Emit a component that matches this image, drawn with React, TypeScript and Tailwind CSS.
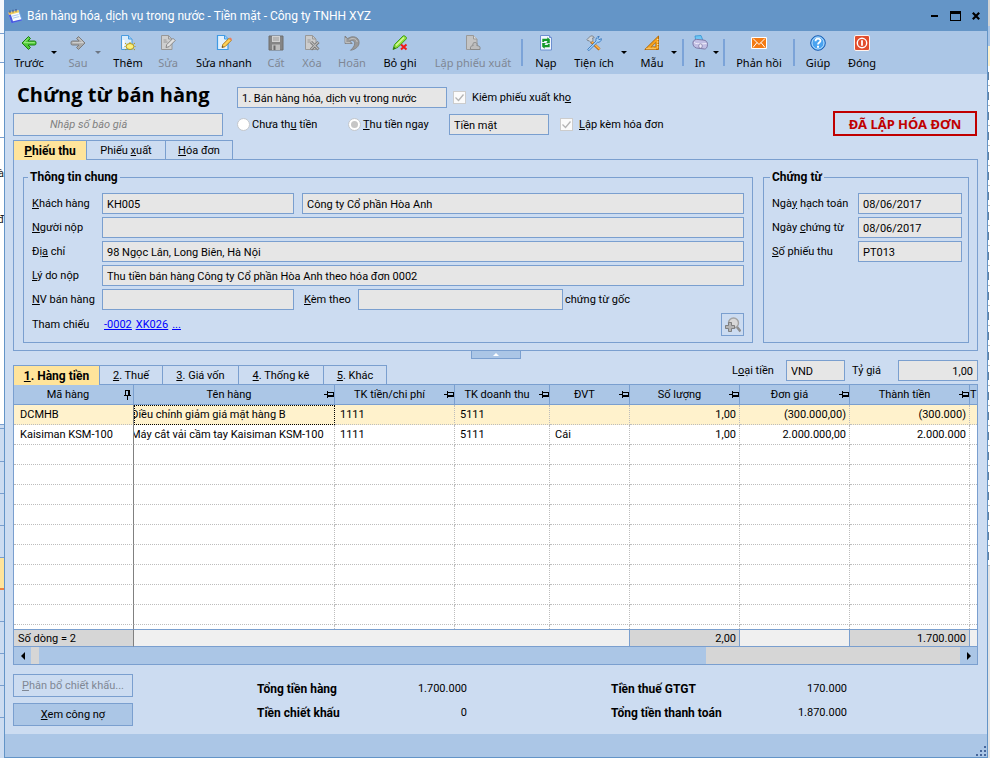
import React from "react";

/* ---------- icons ---------- */

function Svg({ children, size = 16 }: { children: React.ReactNode; size?: number }) {
  return (
    <svg width={size} height={size} viewBox="0 0 16 16" aria-hidden="true" className="shrink-0">
      {children}
    </svg>
  );
}

const BackIcon = () => (
  <Svg>
    <path d="M7.5 1.5 1 8l6.500 6.500 2-2L7 10h6.500a1.500 1.500 0 0 0 1.500-1.500v-1A1.500 1.500 0 0 0 13.500 6H7l2.500-2.500z" fill="#4cc936" stroke="#1c7d12" />
    <path d="M7.500 3 2.800 7.700h11" fill="none" stroke="#a4ee8c" />
  </Svg>
);

const ForwardIcon = () => (
  <Svg>
    <path d="M8.500 1.500 15 8l-6.500 6.500-2-2L9 10H2.500A1.500 1.500 0 0 1 1 8.500v-1A1.500 1.500 0 0 1 2.500 6H9L6.500 3.500z" fill="#a9a9a9" stroke="#7d7d7d" />
    <path d="M8.500 3 13.200 7.700H2.500" fill="none" stroke="#d6d6d6" />
  </Svg>
);

const AddIcon = () => (
  <Svg>
    <path d="M1.500.5h7l3.500 3.500v10.500H1.500z" fill="#d9ecfc" stroke="#4a9ce0" />
    <path d="M8.500.5v3.500H12" fill="#9dcdf5" stroke="#4a9ce0" />
    <path d="M3.500 5v7" stroke="#fff" strokeWidth="2" />
    <ellipse cx="10" cy="11.500" rx="3.800" ry="3" fill="#fdf07c" stroke="#b39a1c" />
    <path d="M5 8l1.500 1.200M15 8l-1.500 1.200M5 15l1.500-1.200M15 15l-1.500-1.200M10 7v1M4.500 11.500h1M14.500 11.500h1" stroke="#b39a1c" />
  </Svg>
);

const EditIcon = () => (
  <Svg>
    <path d="M1.500.5h7l3.500 3.500v10.500H1.500z" fill="#cfcfcf" stroke="#989898" />
    <path d="M8.500.5V4H12M3.500 5h3M3.500 7h4" fill="none" stroke="#989898" />
    <path d="m6 12.500.8-3L13 3.300l2.200 2.200L9 11.700z" fill="#e2e2e2" stroke="#868686" />
  </Svg>
);

const QuickEditIcon = () => (
  <Svg>
    <path d="M1.500.5h7l3.500 3.500v10.500H1.500z" fill="#e3f1fd" stroke="#3f9ae4" strokeWidth="1.200" />
    <path d="M8.500.5V4H12" fill="#a8d3f7" stroke="#3f9ae4" />
    <path d="m6 12.500.8-3L13 3.300l2.200 2.200L9 11.700z" fill="#ffd257" stroke="#b07a1e" />
    <path d="m13 3.300 2.200 2.200 .6-.7c.5-.8-1.200-2.600-2.100-2.100z" fill="#ef7d5e" />
    <path d="m6 12.500.5-1.600 1.100 1.100z" fill="#333" />
  </Svg>
);

const SaveIcon = () => (
  <Svg>
    <path d="M1 1h14v14H1z" fill="#858585" stroke="#6f6f6f" />
    <path d="M4 1h8v6H4z" fill="#d2d2d2" />
    <path d="M5 3h6M5 5h6" stroke="#9b9b9b" />
    <path d="M4 9.500h8V15H4z" fill="#bdbdbd" />
    <path d="M5.500 10.500h2V15h-2z" fill="#6c6c6c" />
  </Svg>
);

const DeleteIcon = () => (
  <Svg>
    <path d="M1.500.5h7l3.500 3.500v10.500H1.500z" fill="#cccccc" stroke="#999" />
    <path d="M8.500.5V4H12M3.500 5h3M3.500 7h3" fill="none" stroke="#999" />
    <path d="m7 7 7.500 7.500M14.500 7 7 14.500" stroke="#777" strokeWidth="3" />
    <path d="m7.200 7.200 7 7M14.200 7.200l-7 7" stroke="#c0c0c0" strokeWidth="1.200" />
  </Svg>
);

const UndoIcon = () => (
  <Svg>
    <path d="M1 1v7.500h7.200L5.900 6.200C8.500 4.700 10.800 5.800 10.600 8.800 10.500 11 9 13 6.500 15.300c5-.8 8.600-3.700 8.600-7.700C15.100 1.900 8.500 0 3.700 3.600z" fill="#999" stroke="#7b7b7b" strokeWidth=".8" />
    <path d="M1.800 3v4.700h4.500M5.500 4.500C9 2.600 12.500 3.500 13.200 7" fill="none" stroke="#c6c6c6" />
  </Svg>
);

const UnpostIcon = () => (
  <Svg>
    <path d="m1 14.500 1.500-5L11 1c1.300-1 4.500 1.400 3.200 3L6 12.300z" fill="#8fe03b" stroke="#3f9b1c" />
    <path d="M4 10.500 12 2.500" stroke="#d5f99f" strokeWidth="1.500" />
    <path d="m1 14.500 1-2.800 1.800 1.800z" fill="#2b6a14" />
    <path d="m9 9.500 5.500 5M14.500 9.500l-5.500 5" stroke="#f01818" strokeWidth="2" />
  </Svg>
);

const IssueIcon = () => (
  <Svg>
    <path d="M1.500.5h7l3.500 3.500v10.500H1.500z" fill="#c4c4c4" stroke="#999" />
    <path d="M8.500.5V4H12" fill="#ddd" stroke="#999" />
    <path d="M5.500 14.500v-2.200c0-1 1.500-1.500 2.700-1.800C6 7 13.500 6 11.800 10.500c1.500.3 3.200.8 3.200 1.800v2.200z" fill="#bdbdbd" stroke="#8a8a8a" />
  </Svg>
);

const ReloadIcon = () => (
  <Svg>
    <path d="M2.500.5h9l2 2v12.500h-11z" fill="#f1f6ff" stroke="#6d8fd0" />
    <path d="M11.500.5v2h2" fill="#b8caee" stroke="#6d8fd0" />
    <path d="M4.300 7V3.700h5V2.300l2.500 2v3.900H8.200l1.300-2.200H6.500L5.800 7z" fill="#149a2a" />
    <path d="M11.700 9v3.300h-5v1.400l-2.500-2V7.900h3.600L6.500 10h3l.7-1z" fill="#149a2a" />
  </Svg>
);

const ToolsIcon = () => (
  <Svg>
    <path d="m5 6.500 8.500 8" stroke="#bb6a10" strokeWidth="3" />
    <path d="m5 6 8.700 8.200" stroke="#ffb74d" strokeWidth="1.500" />
    <path d="M1 4.500 4.500 1C6.500.5 8 1.500 8.200 2.800L6.500 3l.6 2.200L5 7.500 3 5.500 2 6z" fill="#cfd3d8" stroke="#70767e" strokeWidth=".8" />
    <path d="m2 14 8-8c-.5-2.500 1-4.500 3.200-4.700L12 3.500l1 1.200 2.400-1c.2 2.300-1.900 4-4 3.600L3.500 15C2.500 16 1 15 2 14z" fill="#a9d4f9" stroke="#2d6fb8" strokeWidth=".8" />
  </Svg>
);

const RulerIcon = () => (
  <Svg>
    <path d="M14.500 1v13.500H.8z" fill="#f6a21c" stroke="#b36a08" />
    <path d="M11.800 7.500v4.300H7.300z" fill="#abc6e6" stroke="#b36a08" strokeWidth=".8" />
    <path d="M3 13v1.500M5 12.500v2M7 13v1.500M9 12.500v2M11 13v1.500M13 4.500h1.500M13 7h1.500M13 9.500h1.500M13 12h1.500" stroke="#fff1c4" strokeWidth=".8" />
  </Svg>
);

const PrinterIcon = () => (
  <Svg>
    <path d="m3 1 6-.5 2 5-7 1.500z" fill="#6ec6f5" stroke="#3593d2" strokeWidth=".8" />
    <path d="M1 7c.5-2 3-3 5-2.500l5 .5c3 .2 4.500 2 4.500 4.500 0 3-1.500 4.500-3 4.500L4.500 13C2 12.500.5 10 1 7z" fill="#c2bfe4" stroke="#77739f" strokeWidth=".9" />
    <path d="M2 7.500c2 1.500 5 1 7 1.500l5.500-.5" fill="none" stroke="#efeefb" />
    <ellipse cx="8.500" cy="11" rx="1.800" ry="2.200" fill="#eceaf9" stroke="#77739f" strokeWidth=".7" />
  </Svg>
);

const MailIcon = () => (
  <Svg>
    <path d="M.5 2.500h15v11H.5z" fill="#f47a12" stroke="#fff" />
    <path d="m2 3.500 6 6 6-6M2 12.500l4-5M14 12.500l-4-5" fill="none" stroke="#fff" strokeWidth="1" />
  </Svg>
);

const HelpIcon = () => (
  <Svg>
    <circle cx="8" cy="8" r="7.300" fill="#4aa3f0" stroke="#1e5fb2" />
    <circle cx="8" cy="8" r="6" fill="none" stroke="#b9defc" strokeWidth="1" />
    <path d="M5.500 6.200c0-3.300 5-3.200 5-.5C10.500 7.500 8 7.600 8 9.500" fill="none" stroke="#fff" strokeWidth="1.800" />
    <path d="M7 10.800h2v1.900H7z" fill="#fff" />
  </Svg>
);

const PowerIcon = () => (
  <Svg>
    <rect x=".5" y=".5" width="15" height="15" rx="1.500" fill="#e24c2c" stroke="#fff3ee" />
    <circle cx="8" cy="8" r="4.700" fill="none" stroke="#fff" strokeWidth="1.400" />
    <path d="M8 5.200v5.600" stroke="#fff" strokeWidth="1.800" />
  </Svg>
);

const AppIcon = () => (
  <Svg>
    <path d="M1 4.500 11.500 2 15 12 4.500 15z" fill="#f8fbff" stroke="#6aa0e8" strokeWidth=".8" />
    <path d="M.8 4.500 4.500 15.200 15 12.500l-.4-1.300L6 13.300 3 4z" fill="#4b5be0" />
    <path d="M1 4.500 11.500 2l.8 2.200L2 7z" fill="#f3cf5c" />
    <path d="M5 8.200 11.500 6.600M5.700 10.200l6.500-1.600" stroke="#9fc2ee" strokeWidth=".9" />
    <path d="M3 2.500v2.700M6 1.800v2.700M9 1v2.700" stroke="#384a86" strokeWidth="1" />
  </Svg>
);

const ZoomAddIcon = () => (
  <Svg>
    <circle cx="8.500" cy="6" r="5" fill="#d9d9d9" stroke="#a3a3a3" strokeWidth="1.400" />
    <path d="m12 10 3.500 4.500" stroke="#8f8f8f" strokeWidth="2.600" />
    <path d="M3.500 5.500h3v3h3v3h-3v3h-3v-3h-3v-3h3z" fill="#b5b5b5" stroke="#777" strokeWidth=".9" />
  </Svg>
);

function Pin({ pinned = false }: { pinned?: boolean }) {
  return (
    <svg width="10" height="10" viewBox="0 0 10 10" aria-hidden="true" className={pinned ? "mr-px shrink-0" : "shrink-0"} shapeRendering="crispEdges">
      {pinned ? (
        <path d="M3.500.5h4v5M2 5.500h7M3.500 0v5.500M6.500 0v5.500M5.500 6v4" fill="none" stroke="#000" />
      ) : (
        <path d="M0 4.500h3M3.500 1v7M4 2.500h5.500v4M4 5.500h5.500M4 6.500h5.500" fill="none" stroke="#000" />
      )}
    </svg>
  );
}

/* ---------- toolbar ---------- */

type Tool = { label: string; icon: React.ReactNode; cls: string; off?: boolean };

function ToolButton({ label, icon, cls, off }: Tool) {
  return (
    <button
      type="button"
      disabled={off}
      className={`flex shrink-0 flex-col items-center gap-1 pt-1 leading-4 whitespace-nowrap ${cls} ${off ? "text-[#7f8794]" : "text-black"}`}
    >
      {icon}
      <span className="w-max">{label}</span>
    </button>
  );
}

function MenuArrow({ label, off }: { label: string; off?: boolean }) {
  return (
    <button type="button" aria-label={label} disabled={off} className="flex w-3 shrink-0 items-center justify-center">
      <span className={`border-x-[3px] border-t-[3px] border-x-transparent ${off ? "border-t-[#6d7683]" : "border-t-black"}`} />
    </button>
  );
}

const Divider = ({ cls }: { cls: string }) => (
  <span className={`my-2 flex shrink-0 justify-center ${cls}`}>
    <span className="w-0.5 bg-[#7ba3d8]" />
  </span>
);

function Toolbar() {
  return (
    <nav className="flex h-[43px] bg-[#abc6e6] pl-[5px] font-['Noto_Sans','Open_Sans',sans-serif] text-[11px]">
      <ToolButton label="Trước" icon={<BackIcon />} cls="w-[38px]" />
      <MenuArrow label="Chứng từ trước" />
      <ToolButton label="Sau" icon={<ForwardIcon />} cls="ml-1 w-7" off />
      <MenuArrow label="Chứng từ sau" off />
      <ToolButton label="Thêm" icon={<AddIcon />} cls="w-12" />
      <ToolButton label="Sửa" icon={<EditIcon />} cls="w-8" off />
      <ToolButton label="Sửa nhanh" icon={<QuickEditIcon />} cls="w-20" />
      <ToolButton label="Cất" icon={<SaveIcon />} cls="w-6" off />
      <ToolButton label="Xóa" icon={<DeleteIcon />} cls="w-12" off />
      <ToolButton label="Hoãn" icon={<UndoIcon />} cls="w-8" off />
      <ToolButton label="Bỏ ghi" icon={<UnpostIcon />} cls="w-16" />
      <ToolButton label="Lập phiếu xuất" icon={<IssueIcon />} cls="w-[82px]" off />
      <Divider cls="w-4" />
      <ToolButton label="Nạp" icon={<ReloadIcon />} cls="w-8" />
      <ToolButton label="Tiện ích" icon={<ToolsIcon />} cls="ml-2 w-12" />
      <MenuArrow label="Mở tiện ích" />
      <ToolButton label="Mẫu" icon={<RulerIcon />} cls="ml-1.5 w-8" />
      <MenuArrow label="Chọn mẫu" />
      <Divider cls="w-1.5" />
      <ToolButton label="In" icon={<PrinterIcon />} cls="ml-1 w-5" />
      <MenuArrow label="Tùy chọn in" />
      <Divider cls="w-1" />
      <ToolButton label="Phản hồi" icon={<MailIcon />} cls="w-[66px]" />
      <Divider cls="w-1" />
      <ToolButton label="Giúp" icon={<HelpIcon />} cls="w-11" />
      <ToolButton label="Đóng" icon={<PowerIcon />} cls="w-11" />
    </nav>
  );
}

/* ---------- form pieces ---------- */

function Box({ id, value, cls, label }: { id: string; value: string; cls: string; label?: string }) {
  return (
    <input
      id={id}
      aria-label={label}
      readOnly
      defaultValue={value}
      className={`h-[21px] min-w-0 border border-[#7a9fcf] bg-[#e6e6e6] px-1 pt-0.5 text-black outline-none ${cls}`}
    />
  );
}

function Tick({ id, children, cls }: { id: string; children: React.ReactNode; cls: string }) {
  return (
    <span className={`flex items-center gap-1.5 ${cls}`}>
      <span className="relative flex">
        <input id={id} type="checkbox" defaultChecked disabled className="size-[13px] appearance-none border border-[#cccccc] bg-[#fbfbfb]" />
        <svg viewBox="0 0 13 13" aria-hidden="true" className="pointer-events-none absolute inset-0 size-[13px]">
          <path d="m2.500 6.500 3 3 5-6" fill="none" stroke="#b4b4b4" strokeWidth="1.300" />
        </svg>
      </span>
      <label htmlFor={id}>{children}</label>
    </span>
  );
}

function Choice({ id, children, cls, on }: { id: string; children: React.ReactNode; cls: string; on?: boolean }) {
  return (
    <span className={`flex items-center gap-0.5 ${cls}`}>
      <span className="relative flex items-center justify-center">
        <input id={id} name="payment" type="radio" defaultChecked={on} disabled className="size-[13px] appearance-none rounded-full border border-[#c3c7cc] bg-white" />
        {on && <span className="pointer-events-none absolute size-[7px] rounded-full bg-[#c6c6c6]" />}
      </span>
      <label htmlFor={id}>{children}</label>
    </span>
  );
}

function Tab({ children, cls, on, last }: { children: React.ReactNode; cls: string; on?: boolean; last?: boolean }) {
  return (
    <button
      type="button"
      role="tab"
      aria-selected={!!on}
      className={`shrink-0 border-t border-l border-[#7a9fcf] whitespace-nowrap ${last ? "border-r" : ""} ${on ? "relative z-10 -mb-px bg-[#ffe49b] text-[12px] font-bold" : "pt-px"} ${cls}`}
    >
      {children}
    </button>
  );
}

const Row = ({ children }: { children: React.ReactNode }) => <div className="flex h-[21px] items-center">{children}</div>;

function GeneralInfo() {
  return (
    <fieldset className="flex min-w-0 flex-1 flex-col gap-[3px] border border-[#7a9fcf] px-2 pt-2 pb-1.5">
      <legend className="-ml-1 px-0.5 text-[12px] leading-4 font-bold">Thông tin chung</legend>
      <Row>
        <label htmlFor="customer" className="w-[70px]"><u>K</u>hách hàng</label>
        <Box id="customer" value="KH005" cls="mr-2 w-[192px]" />
        <Box id="customer-name" label="Tên khách hàng" value="Công ty Cổ phần Hòa Anh" cls="flex-1" />
      </Row>
      <Row>
        <label htmlFor="payer" className="w-[70px]"><u>N</u>gười nộp</label>
        <Box id="payer" value="" cls="flex-1" />
      </Row>
      <Row>
        <label htmlFor="address" className="w-[70px]">Đị<u>a</u> chỉ</label>
        <Box id="address" value="98 Ngọc Lân, Long Biên, Hà Nội" cls="flex-1" />
      </Row>
      <Row>
        <label htmlFor="reason" className="w-[70px]"><u>L</u>ý do nộp</label>
        <Box id="reason" value="Thu tiền bán hàng Công ty Cổ phần Hòa Anh theo hóa đơn 0002" cls="flex-1" />
      </Row>
      <Row>
        <label htmlFor="seller" className="w-[70px]"><u>N</u>V bán hàng</label>
        <Box id="seller" value="" cls="w-[192px]" />
        <label htmlFor="attached" className="w-16 pl-2.5"><u>K</u>èm theo</label>
        <Box id="attached" value="" cls="w-[205px]" />
        <span className="pl-0.5">chứng từ gốc</span>
      </Row>
      <div className="flex h-[23px] items-center">
        <span className="w-[70px]">Tham chiếu</span>
        <span className="flex flex-1 gap-1 pl-0.5 text-[#0000ff] underline">
          <a href="#0002">-0002</a>
          <a href="#XK026">XK026</a>
          <a href="#more">...</a>
        </span>
        <button type="button" aria-label="Tìm chứng từ" className="flex size-[23px] items-center justify-center border border-[#7a9fcf]">
          <ZoomAddIcon />
        </button>
      </div>
    </fieldset>
  );
}

function VoucherInfo() {
  return (
    <fieldset className="flex w-[206px] shrink-0 flex-col gap-[3px] border border-[#7a9fcf] px-1.5 pt-2">
      <legend className="px-0.5 text-[12px] leading-4 font-bold">Chứng từ</legend>
      <Row>
        <label htmlFor="posted" className="w-[88px] pl-0.5">Ngà<u>y</u> hạch toán</label>
        <Box id="posted" value="08/06/2017" cls="w-[104px]" />
      </Row>
      <Row>
        <label htmlFor="dated" className="w-[88px] pl-0.5">Ngày <u>c</u>hứng từ</label>
        <Box id="dated" value="08/06/2017" cls="w-[104px]" />
      </Row>
      <Row>
        <label htmlFor="receipt" className="w-[88px] pl-0.5"><u>S</u>ố phiếu thu</label>
        <Box id="receipt" value="PT013" cls="w-[104px]" />
      </Row>
    </fieldset>
  );
}

/* ---------- grid ---------- */

const columns = ["Mã hàng", "Tên hàng", "TK tiền/chi phí", "TK doanh thu", "ĐVT", "Số lượng", "Đơn giá", "Thành tiền"];

const items = [
  ["DCMHB", "Điều chỉnh giảm giá mặt hàng B", "1111", "5111", "", "1,00", "(300.000,00)", "(300.000)"],
  ["Kaisiman KSM-100", "Máy cắt vải cầm tay Kaisiman KSM-100", "1111", "5111", "Cái", "1,00", "2.000.000,00", "2.000.000"],
];

const rows: string[][] = [...items, ...Array.from({ length: 9 }, () => Array<string>(8).fill(""))];

function cellClass(col: number, row: number) {
  const base = "h-5 overflow-hidden border-r border-b border-b-[#bdbdbd] border-dotted p-0 whitespace-nowrap";
  if (col === 0) return `${base} border-r-[#808080] [border-right-style:solid] pl-1.5`;
  if (col === 1 && row === 0) return `${base} border-r-[#bdbdbd] outline-1 -outline-offset-1 outline-dotted outline-black`;
  if (col === 1) return `${base} border-r-[#bdbdbd]`;
  if (col > 4) return `${base} border-r-[#bdbdbd] pr-[3px] text-right`;
  return `${base} border-r-[#bdbdbd] pl-[5px]`;
}

function Grid() {
  return (
    <div className="border border-[#7a9fcf]">
      <table className="w-full table-fixed border-separate border-spacing-0 bg-white leading-[15px]">
        <colgroup>
          <col className="w-[120px]" />
          <col className="w-[201px]" />
          <col className="w-[120px]" />
          <col className="w-[95px]" />
          <col className="w-20" />
          <col className="w-[110px]" />
          <col className="w-[110px]" />
          <col className="w-[120px]" />
          <col />
        </colgroup>
        <thead className="bg-[#abc6e6]">
          <tr>
            {columns.map((name, i) => (
              <th key={name} scope="col" className="h-5 border-r border-b border-[#7a9fcf] p-0 font-normal">
                <span className="flex items-center">
                  <span className="flex-1 text-center">{name}</span>
                  <Pin pinned={i === 0} />
                </span>
              </th>
            ))}
            <th scope="col" className="h-5 overflow-hidden border-b border-[#7a9fcf] p-0 text-left font-normal">T</th>
          </tr>
        </thead>
        <tbody>
          {rows.map((cells, r) => (
            <tr key={r} className={r === 0 ? "bg-[#fff2cc]" : ""}>
              {cells.map((text, c) => (
                <td key={c} className={cellClass(c, r)}>
                  {c === 1 ? <span className="-ml-[3px]">{text}</span> : text}
                </td>
              ))}
              <td className="h-5 border-b border-dotted border-[#bdbdbd] p-0" />
            </tr>
          ))}
          <tr>
            {columns.map((name, c) => (
              <td key={name} className={c === 0 ? "h-1 border-r border-[#808080] p-0" : "h-1 border-r border-dotted border-[#bdbdbd] p-0"} />
            ))}
            <td className="h-1 p-0" />
          </tr>
        </tbody>
        <tfoot className="text-black">
          <tr>
            <td className="h-[18px] border-y border-r border-y-[#7a9fcf] border-r-[#808080] bg-[#d6d6d6] p-0 pl-1">Số dòng = 2</td>
            <td colSpan={4} className="h-[18px] border-y border-r border-[#7a9fcf] bg-[#f0f0f0] p-0" />
            <td className="h-[18px] border-y border-r border-[#7a9fcf] bg-[#d6d6d6] p-0 pr-[3px] text-right">2,00</td>
            <td className="h-[18px] border-y border-r border-[#7a9fcf] bg-[#f0f0f0] p-0" />
            <td className="h-[18px] border-y border-r border-[#7a9fcf] bg-[#d6d6d6] p-0 pr-[3px] text-right">1.700.000</td>
            <td className="h-[18px] border-y border-[#7a9fcf] bg-[#f0f0f0] p-0" />
          </tr>
        </tfoot>
      </table>
      <div className="flex h-[17px] bg-[#d6d6d6]">
        <button type="button" aria-label="Cuộn trái" className="flex w-[17px] items-center justify-center bg-[#abc6e6]">
          <span className="border-y-4 border-r-4 border-y-transparent border-r-black" />
        </button>
        <span className="w-2" />
        <span className="w-[667px] bg-[#abc6e6]" />
        <span className="flex-1" />
        <button type="button" aria-label="Cuộn phải" className="flex w-[17px] items-center justify-center bg-[#abc6e6]">
          <span className="border-y-4 border-l-4 border-y-transparent border-l-black" />
        </button>
      </div>
    </div>
  );
}

/* ---------- window behind ---------- */

const leftBands = [
  "h-[34px] border-b border-[#7a9fcf] bg-[#f6f9fd]",
  "h-[29px] border-b border-[#7a9fcf] bg-[#f6f9fd]",
  "h-[75px] border-b border-[#7a9fcf] bg-white",
];

const leftCells = [
  "h-1 border-b border-[#7a9fcf] bg-[#ccdcf1]",
  "h-[33px] border-b border-[#7a9fcf] bg-[#ccdcf1]",
  "h-8 border-b border-[#7a9fcf] bg-[#ccdcf1]",
  "h-8 border-b border-[#7a9fcf] bg-[#ccdcf1]",
  "h-8 border-b border-[#7a9fcf] bg-[#ccdcf1]",
  "h-8 border-b-2 border-[#f08040] bg-[#ffe49b]",
  "h-8 border-b border-[#7a9fcf] bg-[#ccdcf1]",
  "h-8 border-b border-[#7a9fcf] bg-[#ccdcf1]",
  "h-8 border-b border-[#7a9fcf] bg-[#ccdcf1]",
  "h-8 border-b border-[#7a9fcf] bg-[#ccdcf1]",
];

function LeftEdge() {
  return (
    <aside className="flex w-1 shrink-0 flex-col overflow-hidden bg-[#ccdcf1] text-[11px] text-[#222]">
      {leftBands.map((band, i) => (
        <span key={i} className={band} />
      ))}
      <div className="flex h-[287px] flex-col items-end border-b border-[#7a9fcf] bg-white pt-7">
        <span className="leading-4">à</span>
        <span className="pt-[30px] leading-4">đ</span>
      </div>
      {leftCells.map((band, i) => (
        <span key={i} className={band} />
      ))}
    </aside>
  );
}

function RightEdge() {
  return (
    <aside className="flex w-0.5 shrink-0 flex-col overflow-hidden bg-white">
      <span className="h-[26px] bg-[#d4d4d4]" />
      <span className="h-5 bg-[#abc6e6]" />
      <span className="h-5 bg-[#fff2cc]" />
      {Array.from({ length: 25 }, (_, i) => (
        <span key={i} className="flex h-5 shrink-0 flex-col justify-center border-b border-[#bdbdbd]">
          <span className="h-2 w-px bg-[#5f7f9f]" />
        </span>
      ))}
      <span className="flex-1 bg-[#e4e4e4]" />
    </aside>
  );
}

/* ---------- page ---------- */

export default function App() {
  return (
    <div className="flex min-h-screen font-['Roboto','Liberation_Sans',sans-serif] text-[11px] leading-4 text-black">
      <LeftEdge />
      <div className="flex min-w-0 flex-1 flex-col border-x border-b border-[#6394c7] bg-[#ccdcf1]">
        <header className="flex h-[31px] items-center bg-[#6495c7] pl-0.5 text-[12px] text-white">
          <AppIcon />
          <h2 className="flex-1 pl-1">Bán hàng hóa, dịch vụ trong nước - Tiền mặt - Công ty TNHH XYZ</h2>
          <div className="flex items-center gap-[5px] pr-[3px]">
            <button type="button" aria-label="Thu nhỏ" className="flex size-4 items-center justify-center">
              <span className="h-0.5 w-[7px] bg-black" />
            </button>
            <button type="button" aria-label="Phóng to" className="flex size-4 items-center justify-center">
              <span className="h-2.5 w-[11px] border border-t-[3px] border-black" />
            </button>
            <button type="button" aria-label="Đóng cửa sổ" className="flex size-4 items-center justify-center">
              <svg width="8" height="8" viewBox="0 0 8 8" aria-hidden="true">
                <path d="m.8.8 6.400 6.400M7.200.8.8 7.200" stroke="#000" strokeWidth="2.200" />
              </svg>
            </button>
          </div>
        </header>

        <Toolbar />

        <main className="flex flex-1 flex-col pt-1.5 pr-[9px] pl-2">
          <section className="flex">
            <div className="flex w-[210px] shrink-0 flex-col gap-[3px]">
              <h1 className="pl-1 font-['Open_Sans','Noto_Sans',sans-serif] text-[20px] leading-[30px] font-bold whitespace-nowrap">Chứng từ bán hàng</h1>
              <input
                aria-label="Nhập số báo giá"
                placeholder="Nhập số báo giá"
                className="h-[23px] border border-[#7a9fcf] bg-[#e6e6e6] px-9 italic outline-none placeholder:text-[#808080]"
              />
            </div>
            <div className="flex flex-col gap-1.5 pt-[7px] pl-3.5">
              <Row>
                <Box id="kind" label="Loại chứng từ" value="1. Bán hàng hóa, dịch vụ trong nước" cls="w-[210px]" />
                <Tick id="stock" cls="ml-1.5">Kiêm phiếu xuất kh<u>o</u></Tick>
              </Row>
              <Row>
                <Choice id="unpaid" cls="w-[111px]">Chưa th<u>u</u> tiền</Choice>
                <Choice id="paid" cls="w-[101px]" on><u>T</u>hu tiền ngay</Choice>
                <Box id="method" label="Hình thức thanh toán" value="Tiền mặt" cls="w-[100px]" />
                <Tick id="invoice" cls="ml-[11px]"><u>L</u>ập kèm hóa đơn</Tick>
              </Row>
            </div>
            <strong className="mr-px ml-auto flex h-[25px] w-36 items-center justify-center self-end border-2 border-[#c00000] font-['Noto_Sans','Open_Sans',sans-serif] text-[13px] font-bold whitespace-nowrap text-[#c00000]">
              ĐÃ LẬP HÓA ĐƠN
            </strong>
          </section>

          <div role="tablist" className="mt-1 flex h-[19px]">
            <Tab cls="w-[73px]" on><u>P</u>hiếu thu</Tab>
            <Tab cls="w-[79px]">Phiếu <u>x</u>uất</Tab>
            <Tab cls="w-[68px]" last><u>H</u>óa đơn</Tab>
          </div>
          <section className="flex gap-2.5 border border-[#7a9fcf] pt-[9px] pr-2 pb-[7px] pl-[9px]">
            <GeneralInfo />
            <VoucherInfo />
          </section>

          <button type="button" aria-label="Thu gọn" className="-mt-px mb-px flex h-[9px] w-[50px] items-center justify-center self-center border border-[#7a9fcf] bg-[#abc6e6]">
            <span className="border-x-[3px] border-b-[3px] border-x-transparent border-b-white" />
          </button>

          <div className="flex h-6">
            <div role="tablist" className="flex h-[19px] self-end">
              <Tab cls="w-[86px]" on><u>1</u>. Hàng tiền</Tab>
              <Tab cls="w-[63px]"><u>2</u>. Thuế</Tab>
              <Tab cls="w-[76px]"><u>3</u>. Giá vốn</Tab>
              <Tab cls="w-[85px]"><u>4</u>. Thống kê</Tab>
              <Tab cls="w-16" last><u>5</u>. Khác</Tab>
            </div>
            <div className="ml-auto flex h-[21px] items-center">
              <label htmlFor="currency" className="w-[54px]">L<u>o</u>ại tiền</label>
              <Box id="currency" value="VND" cls="w-[59px]" />
              <label htmlFor="rate" className="w-[53px] pl-[7px]">Tỷ <u>g</u>iá</label>
              <Box id="rate" value="1,00" cls="w-20 text-right" />
            </div>
          </div>

          <Grid />

          <footer className="flex pt-[9px] pb-2">
            <div className="flex w-[120px] shrink-0 flex-col gap-1.5">
              <button type="button" disabled className="h-[23px] border border-[#7a9fcf] text-[#7f8794]"><u>P</u>hân bổ chiết khấu...</button>
              <button type="button" className="h-[23px] border border-[#7a9fcf] bg-[#abc6e6]"><u>X</u>em công nợ</button>
            </div>
            <dl className="ml-[124px] grid w-[210px] shrink-0 grid-cols-[auto_1fr] content-start pt-[3px] leading-6">
              <dt className="text-[12px] font-bold">Tổng tiền hàng</dt>
              <dd className="text-right">1.700.000</dd>
              <dt className="text-[12px] font-bold">Tiền chiết khấu</dt>
              <dd className="text-right">0</dd>
            </dl>
            <dl className="ml-36 grid w-[236px] grid-cols-[auto_1fr] content-start pt-[3px] leading-6">
              <dt className="text-[12px] font-bold">Tiền thuế GTGT</dt>
              <dd className="text-right">170.000</dd>
              <dt className="text-[12px] font-bold">Tổng tiền thanh toán</dt>
              <dd className="text-right">1.870.000</dd>
            </dl>
          </footer>
        </main>

        <div className="flex h-[23px] items-end justify-end bg-[#abc6e6]">
          <svg width="12" height="12" viewBox="0 0 12 12" aria-hidden="true" shapeRendering="crispEdges">
            <path d="M9 1h2v2H9zM5 5h2v2H5zM9 5h2v2H9zM1 9h2v2H1zM5 9h2v2H5zM9 9h2v2H9z" fill="#47679b" />
          </svg>
        </div>
      </div>
      <RightEdge />
    </div>
  );
}
